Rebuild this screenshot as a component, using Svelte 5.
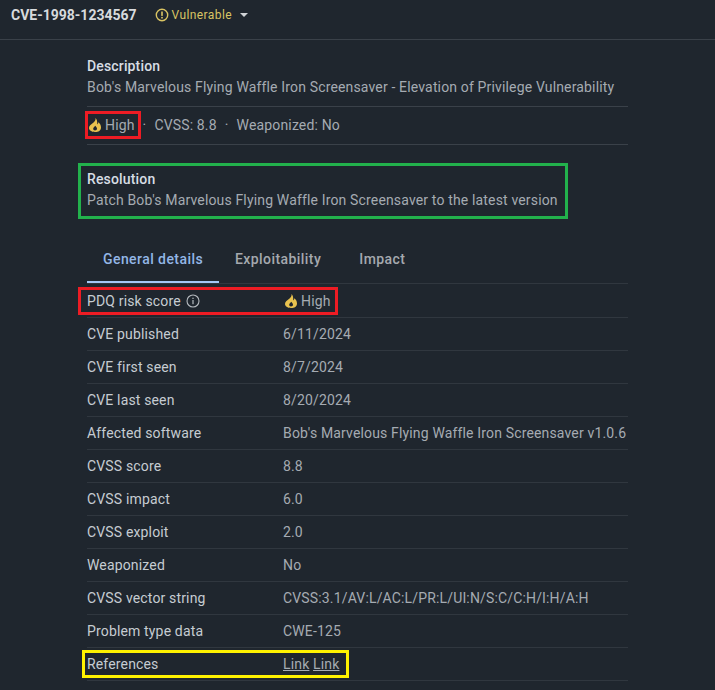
<script>
  const rows = [
    ['CVE published', '6/11/2024'],
    ['CVE first seen', '8/7/2024'],
    ['CVE last seen', '8/20/2024'],
    ['Affected software', "Bob's Marvelous Flying Waffle Iron Screensaver v1.0.6"],
    ['CVSS score', '8.8'],
    ['CVSS impact', '6.0'],
    ['CVSS exploit', '2.0'],
    ['Weaponized', 'No'],
    ['CVSS vector string', 'CVSS:3.1/AV:L/AC:L/PR:L/UI:N/S:C/C:H/I:H/A:H'],
    ['Problem type data', 'CWE-125']
  ];
  const flame = 'M8.500 1C9 3.500 7.300 4.800 5.600 6.300 4 7.600 2 9 2 11.100 2 13.500 4.500 15 8 15s6-1.700 6-4.600c0-2.300-1.300-4-2.600-5.100-.1 1-.5 1.700-1.200 2.100C10.400 5 10.100 2.500 8.500 1zM8 13.400c-1 0-1.800-.7-1.800-1.700 0-1.200 1.200-1.800 2.100-3 .8 1 1.700 1.800 1.700 3 0 1-1 1.700-2 1.700z';
</script>

<div class="page">
  <header class="top">
    <span class="cve">CVE-1998-1234567</span>
    <span class="status">
      <svg width="14" height="14" viewBox="0 0 14 14" aria-hidden="true">
        <circle cx="7" cy="7" r="5.700" fill="none" stroke="currentColor" stroke-width="1.400" />
        <rect x="6.200" y="3.500" width="1.600" height="4.400" fill="currentColor" />
        <rect x="6.200" y="8.900" width="1.600" height="1.600" fill="currentColor" />
      </svg>
      <span class="status-text">Vulnerable</span>
      <span class="caret"></span>
    </span>
  </header>

  <main class="body">
    <section class="summary">
      <h4>Description</h4>
      <p>Bob's Marvelous Flying Waffle Iron Screensaver - Elevation of Privilege Vulnerability</p>
    </section>

    <div class="meta">
      <span class="risk boxed red">
        <svg width="16" height="16" viewBox="0 0 16 16" aria-hidden="true"><path d={flame} fill="#e8c24f" fill-rule="evenodd" /></svg>
        High
      </span>
      <span class="dot">·</span>
      <span>CVSS: 8.8</span>
      <span class="dot">·</span>
      <span>Weaponized: No</span>
    </div>

    <section class="resolution boxed green">
      <h4>Resolution</h4>
      <p>Patch Bob's Marvelous Flying Waffle Iron Screensaver to the latest version</p>
    </section>

    <nav class="tabs">
      <span class="tab active">General details</span>
      <span class="tab">Exploitability</span>
      <span class="tab last">Impact</span>
    </nav>

    <div class="table">
      <div class="row first">
        <div class="label">
          PDQ risk score
          <svg class="info" width="14" height="14" viewBox="0 0 14 14" aria-hidden="true">
            <circle cx="7" cy="7" r="6" fill="none" stroke="currentColor" stroke-width="1.100" />
            <rect x="6.400" y="6" width="1.200" height="4.200" fill="currentColor" />
            <rect x="6.400" y="3.700" width="1.200" height="1.300" fill="currentColor" />
          </svg>
        </div>
        <div class="value risk">
          <svg width="16" height="16" viewBox="0 0 16 16" aria-hidden="true"><path d={flame} fill="#e8c24f" fill-rule="evenodd" /></svg>
          High
        </div>
        <span class="mark red-row"></span>
      </div>
      {#each rows as [label, value]}
        <div class="row">
          <div class="label">{label}</div>
          <div class="value">{value}</div>
        </div>
      {/each}
      <div class="row">
        <div class="label">References</div>
        <div class="value"><a href="#top">Link</a> <a href="#top">Link</a></div>
        <span class="mark yellow-row"></span>
      </div>
    </div>
  </main>
</div>

<style>
  :global(body) {
    background: #1f262e;
  }

  .page {
    width: 715px;
    height: 690px;
    overflow: hidden;
    background: #1f262e;
    color: #a5abb2;
    font-family: Roboto, "Liberation Sans", sans-serif;
    font-size: 14px;
    line-height: 20px;
    letter-spacing: 0.155px;
  }

  .top {
    display: flex;
    align-items: center;
    gap: 18px;
    height: 40px;
    padding: 0 11px 10px;
    box-sizing: border-box;
    border-bottom: 1px solid #3a4149;
  }

  .cve {
    color: #d7dadd;
    font-weight: 700;
    letter-spacing: 0;
  }

  .status {
    display: flex;
    align-items: center;
    gap: 3px;
    color: #d9c463;
    font-size: 12px;
    letter-spacing: 0.4px;
  }

  .caret {
    width: 0;
    height: 0;
    margin-left: 5px;
    border-left: 4px solid transparent;
    border-right: 4px solid transparent;
    border-top: 4px solid #d0d3d6;
  }

  .body {
    width: 541px;
    padding: 16px 87px 0;
  }

  h4 {
    margin: 0;
    color: #d7dde4;
    font-size: 14px;
    font-weight: 500;
    line-height: 20px;
  }

  p {
    margin: 1px 0 0;
    line-height: 21px;
    white-space: nowrap;
  }

  .summary {
    padding-bottom: 8px;
    border-bottom: 1px solid #3a4149;
  }

  .meta {
    display: flex;
    align-items: center;
    gap: 8px;
    height: 36px;
    padding-bottom: 1px;
    border-bottom: 1px solid #3a4149;
  }

  .risk {
    display: flex;
    align-items: center;
    gap: 2px;
  }

  .boxed {
    position: relative;
  }

  .boxed::after,
  .mark {
    content: '';
    position: absolute;
    box-sizing: border-box;
    pointer-events: none;
  }

  .boxed.red::after {
    inset: -4px -6px -4px -2px;
    border: 3px solid #ed1c24;
  }

  .resolution {
    width: fit-content;
    margin-top: 24px;
  }

  .boxed.green::after {
    inset: -6px -10px -8px -9px;
    border: 3px solid #22b14c;
  }

  .tabs {
    display: flex;
    box-sizing: border-box;
    height: 47px;
    margin-top: 26px;
    border-bottom: 1px solid #30373f;
  }

  .tab {
    display: flex;
    align-items: center;
    padding: 0 16px 2px;
    color: #a5a9ae;
    font-weight: 500;
    letter-spacing: 0.43px;
  }

  .tab.last {
    padding-left: 22px;
  }

  .tab.active {
    padding-bottom: 0;
    color: #93b6e6;
    border-bottom: 2px solid #a4c6f5;
  }

  .row {
    position: relative;
    display: flex;
    align-items: center;
    box-sizing: border-box;
    height: 33px;
    border-bottom: 1px solid #30373f;
  }

  .row.first {
    height: 34px;
  }

  .label {
    display: flex;
    align-items: center;
    gap: 5px;
    flex: none;
    width: 196px;
    color: #c6ccd2;
  }

  .info {
    color: #b4b9be;
  }

  .value {
    white-space: nowrap;
  }

  .value a {
    color: inherit;
  }

  .mark.red-row {
    left: -9px;
    top: 3px;
    width: 260px;
    height: 28px;
    border: 3px solid #ed1c24;
  }

  .mark.yellow-row {
    left: -5px;
    top: 2px;
    width: 267px;
    height: 28px;
    border: 3px solid #fff200;
  }
</style>
